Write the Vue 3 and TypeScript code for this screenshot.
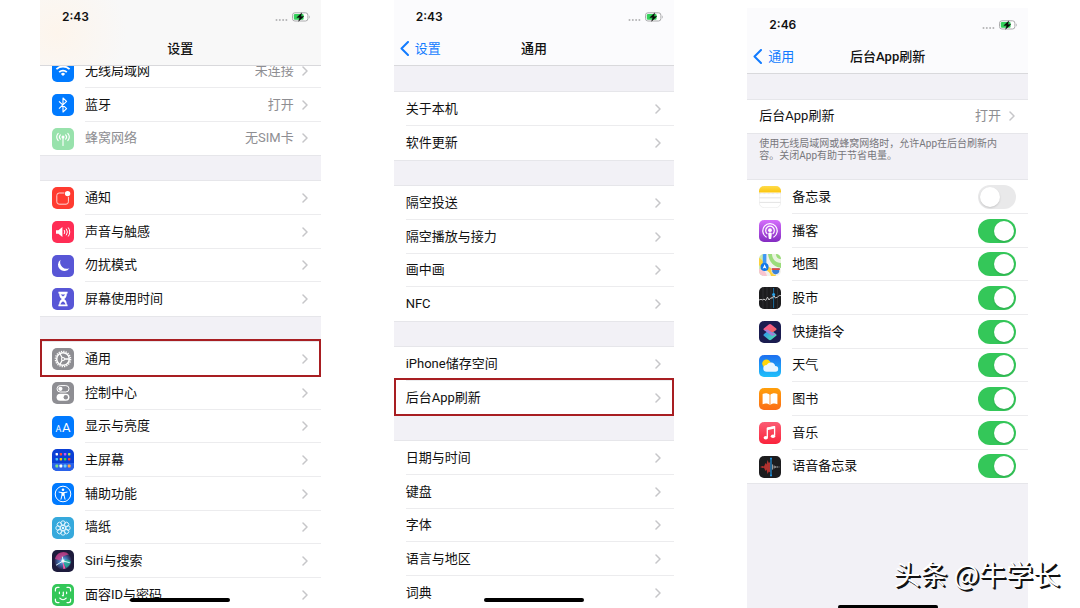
<script setup lang="ts">
import { reactive } from 'vue'

interface Row {
  label: string
  icon?: string
  value?: string
  muted?: boolean
  marked?: boolean
  on?: boolean
}

interface Section {
  kind: 'links' | 'switches'
  rows: Row[]
  note?: string
}

interface Phone {
  id: string
  time: string
  title: string
  back?: string
  sections: Section[]
}

const spokes = (count: number, draw: (angle: number) => string): string =>
  Array.from({ length: count }, (_, i) => draw((360 / count) * i)).join('')

const icons: Record<string, string> = {
  wifi: `<rect width="22" height="22" rx="5" fill="#007aff"/>
    <g fill="none" stroke="#fff" stroke-width="1.8"><path d="M4.4 9.2a9.4 9.4 0 0 1 13.2 0"/><path d="M7.2 12.1a5.4 5.4 0 0 1 7.6 0"/></g>
    <path d="M8.9 13.9a3 3 0 0 1 4.2 0L11 16z" fill="#fff"/>`,
  bluetooth: `<rect width="22" height="22" rx="5" fill="#007aff"/>
    <path d="M7 7.4l7.6 7.2L11 18V4l3.6 3.4L7 14.6" fill="none" stroke="#fff" stroke-width="1.1" stroke-linejoin="round"/>`,
  cellular: `<rect width="22" height="22" rx="5" fill="#98e2ac"/>
    <g fill="none" stroke="#fff" stroke-width="1.1" stroke-linecap="round"><path d="M11 9v8.4"/><path d="M8.4 6.8a3.2 3.2 0 0 0 0 4.4M13.6 6.8a3.2 3.2 0 0 1 0 4.4M6.2 5.4a5.6 5.6 0 0 0 0 7.2M15.8 5.4a5.6 5.6 0 0 1 0 7.2"/></g>
    <circle cx="11" cy="9" r="1.5" fill="#fff"/>`,
  notice: `<rect width="22" height="22" rx="5" fill="#ff3b30"/>
    <rect x="4.8" y="6" width="11.6" height="11.2" rx="2.4" fill="none" stroke="#ffd6d3" stroke-width="1"/>
    <circle cx="15.6" cy="6.6" r="3.4" fill="#ff3b30"/><circle cx="15.6" cy="6.6" r="2.7" fill="#fff"/>`,
  sound: `<rect width="22" height="22" rx="5" fill="#ff2d55"/>
    <path d="M4 9.2h2.4L10.4 6v10l-4-3.2H4z" fill="#fff"/>
    <g fill="none" stroke="#fff" stroke-width="1" stroke-linecap="round"><path d="M12.4 9.4a3 3 0 0 1 0 3.2M14.4 8a5 5 0 0 1 0 6M16.4 6.8a7.4 7.4 0 0 1 0 8.4"/></g>`,
  moon: `<rect width="22" height="22" rx="5" fill="#5856d6"/>
    <path d="M8.6 4.8a6.2 6.2 0 1 0 8.8 8.4A6.6 6.6 0 0 1 8.6 4.8z" fill="#fff"/>`,
  hourglass: `<rect width="22" height="22" rx="5" fill="#5856d6"/>
    <path d="M6.400 3.800h9.200v1.600h-.8c0 3-1 4.400-2.600 5.600 1.600 1.200 2.600 2.600 2.600 5.600h.8v1.600H6.400v-1.600h.8c0-3 1-4.400 2.600-5.600-1.600-1.200-2.600-2.600-2.600-5.600h-.8z" fill="#fff"/>
    <path d="M8.600 6.400h4.800L11 8.400zM8.400 16.400c.4-1.600 1.600-2.200 2.600-3.200 1 1 2.200 1.600 2.600 3.200z" fill="#5856d6"/>`,
  gear: `<rect width="22" height="22" rx="5" fill="#8e8e93"/>
    <circle cx="11" cy="11" r="7.600" fill="none" stroke="#fff" stroke-width="1.400" stroke-dasharray="1.300 1.087"/>
    <circle cx="11" cy="11" r="6.300" fill="none" stroke="#fff" stroke-width="1.500"/>
    <circle cx="11" cy="11" r="1.500" fill="none" stroke="#fff" stroke-width="1.100"/>
    <path d="M12.500 11h4.600M10.200 9.700L8 5.800M10.200 12.300L8 16.200" stroke="#fff" stroke-width="1.300"/>`,
  control: `<rect width="22" height="22" rx="5" fill="#8e8e93"/>
    <rect x="5" y="3.600" width="12" height="6.400" rx="3.200" fill="none" stroke="#fff" stroke-width="1"/><circle cx="8.400" cy="6.800" r="2.100" fill="#fff"/>
    <rect x="4.600" y="11.800" width="12.800" height="7" rx="3.500" fill="#fff"/><circle cx="13.800" cy="15.300" r="2.200" fill="#8e8e93"/>`,
  display: `<rect width="22" height="22" rx="5" fill="#007aff"/>
    <text x="3.600" y="15.600" font-size="9" fill="#fff">A</text><text x="10" y="15.600" font-size="13" fill="#fff">A</text>`,
  home: `<rect width="22" height="22" rx="5" fill="#0a3fd6"/><path d="M0 14h22v3a5 5 0 0 1-5 5H5a5 5 0 0 1-5-5z" fill="#2a62ea"/>
    <g><rect x="3.600" y="4" width="2.400" height="2.400" rx=".6" fill="#fff"/><rect x="7.700" y="4" width="2.400" height="2.400" rx=".6" fill="#ff453a"/><rect x="11.900" y="4" width="2.400" height="2.400" rx=".6" fill="#c65bf5"/><rect x="16" y="4" width="2.400" height="2.400" rx=".6" fill="#b5e04c"/>
    <rect x="3.600" y="9" width="2.400" height="2.400" rx=".6" fill="#4ac8fa"/><rect x="7.700" y="9" width="2.400" height="2.400" rx=".6" fill="#ffcc00"/><rect x="11.900" y="9" width="2.400" height="2.400" rx=".6" fill="#34d05b"/><rect x="16" y="9" width="2.400" height="2.400" rx=".6" fill="#ff453a"/>
    <rect x="3.400" y="15.600" width="2.800" height="2.800" rx=".6" fill="#7fe08a"/><rect x="7.500" y="15.600" width="2.800" height="2.800" rx=".6" fill="#fff"/><rect x="11.700" y="15.600" width="2.800" height="2.800" rx=".6" fill="#6bd0ff"/><rect x="15.800" y="15.600" width="2.800" height="2.800" rx=".6" fill="#ffa64d"/></g>`,
  access: `<rect width="22" height="22" rx="5" fill="#007aff"/>
    <circle cx="11" cy="11" r="7.800" fill="none" stroke="#fff" stroke-width="1"/><circle cx="11" cy="6.800" r="1.300" fill="#fff"/>
    <path d="M7 9.100l3 .5v2.400l-1 4.200M15 9.100l-3 .5v2.400l1 4.200" fill="none" stroke="#fff" stroke-width="1" stroke-linecap="round"/><path d="M9.800 9.200h2.400v3.600H9.800z" fill="#fff"/>`,
  wallpaper: `<rect width="22" height="22" rx="5" fill="#36a9dc"/>
    <g fill="none" stroke="#e8f7ff" stroke-width=".9">${spokes(8, (a) => `<circle cx="11" cy="6" r="2.200" transform="rotate(${a} 11 11)"/>`)}<circle cx="11" cy="11" r="2.600"/></g>
    <circle cx="11" cy="11" r="1.200" fill="#e8f7ff"/>`,
  siri: `<defs><radialGradient id="siriOrb"><stop offset="0" stop-color="#b9f4ff"/><stop offset=".35" stop-color="#4a86c8"/><stop offset="1" stop-color="#28244f"/></radialGradient></defs>
    <rect width="22" height="22" rx="5" fill="#1d1b3c"/><circle cx="11" cy="11" r="8.600" fill="url(#siriOrb)"/>
    <path d="M3 9a8.400 8.400 0 0 1 14-4.600C13 5 9 7 8.400 10.500 6.500 10 4.500 9.500 3 9z" fill="#d8408c" opacity=".75"/>
    <path d="M11 11c3-2 6-2 8 1-1 3-3 5-5 6z" fill="#27b99a" opacity=".75"/>
    <path d="M11 11l-.6-4M11 11l-6.600 4M11 11l6.400 1.600" stroke="#d6f3fb" stroke-width="1" stroke-linecap="round"/>
    <path d="M10.400 10.500l1 8.500 2.200-.6z" fill="#ff5aa5"/><circle cx="11" cy="11" r="1.600" fill="#fff" opacity=".8"/>`,
  face: `<rect width="22" height="22" rx="5" fill="#34c759"/>
    <g fill="none" stroke="#fff" stroke-width="1.200" stroke-linecap="round"><path d="M3.400 7V5.400a2 2 0 0 1 2-2H7M15 3.400h1.600a2 2 0 0 1 2 2V7M18.600 15v1.600a2 2 0 0 1-2 2H15M7 18.600H5.400a2 2 0 0 1-2-2V15"/><path d="M7.400 8v1.600M14.600 8v1.600M11.300 8v3.600h-.9M7.800 14.200c1.800 1.800 4.600 1.800 6.400 0"/></g>`,
  notes: `<defs><linearGradient id="notesTop" x2="0" y2="1"><stop stop-color="#ffdb4a"/><stop offset="1" stop-color="#fbc50c"/></linearGradient></defs>
    <rect x=".3" y=".3" width="21.400" height="21.400" rx="5" fill="#fff" stroke="#e6e6e6" stroke-width=".6"/>
    <path d="M0 6.600V5a5 5 0 0 1 5-5h12a5 5 0 0 1 5 5v1.600z" fill="url(#notesTop)"/>
    <path d="M0 7.600h22" stroke="#cfcfcf" stroke-width=".6" stroke-dasharray=".7 .6"/><path d="M.5 11.800h21M.5 16.400h21" stroke="#dcdcdc" stroke-width=".8"/>`,
  podcast: `<defs><linearGradient id="podBg" x2="0" y2="1"><stop stop-color="#d56efc"/><stop offset="1" stop-color="#832bc1"/></linearGradient></defs>
    <rect width="22" height="22" rx="5" fill="url(#podBg)"/>
    <g fill="none" stroke="#fff" stroke-width="1.200" stroke-linecap="round"><path d="M7.200 17a7.200 7.200 0 1 1 7.600 0"/><path d="M8 13.600a4.300 4.300 0 1 1 6 0"/></g>
    <circle cx="11" cy="10.200" r="1.900" fill="#fff"/><path d="M9.200 13.800c0-1.600 3.600-1.600 3.600 0l-.5 4.400c-.2 1.200-2.400 1.200-2.600 0z" fill="#fff"/>`,
  maps: `<defs><clipPath id="mapClip"><rect width="22" height="22" rx="5"/></clipPath></defs>
    <g clip-path="url(#mapClip)"><path d="M0 0h22v22H0z" fill="#f2f1ec"/><path d="M9 0h13v14C15 13 10 8 9 0z" fill="#9bdc7b"/><path d="M13 0c0 5 4 9 9 9V5c-3 0-5-2-5-5z" fill="#e9f3df"/>
    <path d="M0 0h4v22H0z" fill="#c9ebb3"/><path d="M0 4c3 0 5 7 8 8s8 4 9 10h-5C11 16 3 15 0 11z" fill="#fcd23c"/><path d="M0 15c4 0 7 3 8 7H0z" fill="#f9c4d0"/>
    <path d="M3.800 0h3.600v10H3.800z" fill="#3f98f4"/><circle cx="5.600" cy="13" r="4" fill="#1378e8"/><path d="M5.600 10.200l2 4.600-2-1-2 1z" fill="#fff"/>
    <path d="M12.500 14h8.500l-.4 3.600c-.4 2-2 2.600-3.900 3.200-1.900-.6-3.500-1.200-3.900-3.200z" fill="#3a80d8" stroke="#fff" stroke-width=".7"/><path d="M12.600 14.200h8.300l-.2 1.700h-7.900z" fill="#e2483f"/></g>`,
  stocks: `<rect width="22" height="22" rx="5" fill="#1c1c1e"/>
    <path d="M4 0v22M8 0v22M12 0v22M18.500 0v22" stroke="#3a3a3c" stroke-width=".6"/><path d="M14.600 1v20" stroke="#1c6fa0" stroke-width="1"/>
    <path d="M0 13l2-.6 1.600.5 1.400-.8 1.800 1.300 1.700-3.200 1.500 2.800 2-2.400 1.200.8 1.600-3 1.600 2.600 2-.8 1.800-1.600H22" fill="none" stroke="#d8d8d8" stroke-width=".9"/><circle cx="14.600" cy="7.600" r="1.500" fill="#2aa3e8"/>`,
  shortcuts: `<defs><linearGradient id="scTop" x2="1" y2="1"><stop stop-color="#f9569a"/><stop offset="1" stop-color="#ee6a5b"/></linearGradient><linearGradient id="scLow" x2="1" y2=".6"><stop stop-color="#2f8cf5"/><stop offset="1" stop-color="#4adfae"/></linearGradient></defs>
    <rect width="22" height="22" rx="5" fill="#1b1c50"/>
    <path d="M8.400 10.200l-3.600 3q-.8.800 0 1.600l5 4q1.200.8 2.400 0l5-4q.8-.8 0-1.600l-3.800-3z" fill="url(#scLow)"/>
    <path d="M9.800 3.400q1.200-.8 2.400 0l5 4q.8.800 0 1.600l-3.600 2.600-5.400-2-3.400-.6q-.8-.8 0-1.600z" fill="url(#scTop)"/><path d="M4.800 9l3.600-.4 6 3.600 2.800 1-4 1.800z" fill="#a37fd6"/>`,
  weather: `<defs><linearGradient id="skyBg" x2="0" y2="1"><stop stop-color="#1d6ff0"/><stop offset="1" stop-color="#1fc0fb"/></linearGradient></defs>
    <rect width="22" height="22" rx="5" fill="url(#skyBg)"/><circle cx="7.400" cy="8.600" r="4.200" fill="#ffd60a"/>
    <path d="M7.800 16.800a3.400 3.400 0 0 1-.2-6.800 4.600 4.600 0 0 1 8.600 1 2.900 2.900 0 0 1 .2 5.800z" fill="#eaf6ff"/>`,
  books: `<defs><linearGradient id="bookBg" x2="0" y2="1"><stop stop-color="#ff9f0a"/><stop offset="1" stop-color="#fb6d17"/></linearGradient></defs>
    <rect width="22" height="22" rx="5" fill="url(#bookBg)"/>
    <path d="M10.600 6.800C9 5 6 4.800 3.600 6v10.200c2.600-1 5.200-.8 7 .8zM11.400 6.800C13 5 16 4.800 18.400 6v10.200c-2.600-1-5.200-.8-7 .8z" fill="#fff"/>`,
  music: `<defs><linearGradient id="musicBg" x2="0" y2="1"><stop stop-color="#fb5c74"/><stop offset="1" stop-color="#fa233b"/></linearGradient></defs>
    <rect width="22" height="22" rx="5" fill="url(#musicBg)"/>
    <path d="M8.300 15.400V6.200l7.300-1.600v9.200" fill="none" stroke="#fff" stroke-width="1.300" stroke-linejoin="round"/><path d="M8 5.800l8-1.700v2.400L8 8.200z" fill="#fff"/>
    <ellipse cx="6.800" cy="15.800" rx="2.200" ry="1.800" fill="#fff"/><ellipse cx="14" cy="14.200" rx="2.200" ry="1.800" fill="#fff"/>`,
  voice: `<rect width="22" height="22" rx="5" fill="#1c1c1e"/>
    <path d="M1 11l2.500-1 1.500.4L6.500 7l1 1.500L8.600 4l1.200 3 1.400-1v10.500l-1.400-1L8.600 18l-1.100-4.400-1 1.400L5 11.800l-1.500.2z" fill="#b3322f"/>
    <path d="M13.600 8.400v5.200M15.200 9.600v2.800M16.800 10v2M18.400 10.400v1.200M20 10.600v.8" stroke="#b8b8b8" stroke-width=".9"/><path d="M12 2v18" stroke="#2196e0" stroke-width="1.200"/>
    <circle cx="12" cy="2.400" r="1" fill="#2196e0"/><circle cx="12" cy="19.600" r="1" fill="#2196e0"/>`,
}

const phones = reactive<Phone[]>([
  {
    id: 'settings',
    time: '2:43',
    title: '设置',
    sections: [
      {
        kind: 'links',
        rows: [
          { label: '无线局域网', icon: 'wifi', value: '未连接' },
          { label: '蓝牙', icon: 'bluetooth', value: '打开' },
          { label: '蜂窝网络', icon: 'cellular', value: '无SIM卡', muted: true },
        ],
      },
      {
        kind: 'links',
        rows: [
          { label: '通知', icon: 'notice' },
          { label: '声音与触感', icon: 'sound' },
          { label: '勿扰模式', icon: 'moon' },
          { label: '屏幕使用时间', icon: 'hourglass' },
        ],
      },
      {
        kind: 'links',
        rows: [
          { label: '通用', icon: 'gear', marked: true },
          { label: '控制中心', icon: 'control' },
          { label: '显示与亮度', icon: 'display' },
          { label: '主屏幕', icon: 'home' },
          { label: '辅助功能', icon: 'access' },
          { label: '墙纸', icon: 'wallpaper' },
          { label: 'Siri与搜索', icon: 'siri' },
          { label: '面容ID与密码', icon: 'face' },
        ],
      },
    ],
  },
  {
    id: 'general',
    time: '2:43',
    title: '通用',
    back: '设置',
    sections: [
      { kind: 'links', rows: [{ label: '关于本机' }, { label: '软件更新' }] },
      {
        kind: 'links',
        rows: [{ label: '隔空投送' }, { label: '隔空播放与接力' }, { label: '画中画' }, { label: 'NFC' }],
      },
      { kind: 'links', rows: [{ label: 'iPhone储存空间' }, { label: '后台App刷新', marked: true }] },
      {
        kind: 'links',
        rows: [
          { label: '日期与时间' },
          { label: '键盘' },
          { label: '字体' },
          { label: '语言与地区' },
          { label: '词典' },
        ],
      },
    ],
  },
  {
    id: 'refresh',
    time: '2:46',
    title: '后台App刷新',
    back: '通用',
    sections: [
      {
        kind: 'links',
        rows: [{ label: '后台App刷新', value: '打开' }],
        note: '使用无线局域网或蜂窝网络时，允许App在后台刷新内容。关闭App有助于节省电量。',
      },
      {
        kind: 'switches',
        rows: [
          { label: '备忘录', icon: 'notes', on: false },
          { label: '播客', icon: 'podcast', on: true },
          { label: '地图', icon: 'maps', on: true },
          { label: '股市', icon: 'stocks', on: true },
          { label: '快捷指令', icon: 'shortcuts', on: true },
          { label: '天气', icon: 'weather', on: true },
          { label: '图书', icon: 'books', on: true },
          { label: '音乐', icon: 'music', on: true },
          { label: '语音备忘录', icon: 'voice', on: true },
        ],
      },
    ],
  },
])
</script>

<template>
  <main class="board" lang="zh-CN">
    <article v-for="phone in phones" :key="phone.id" class="phone" :class="phone.id">
      <header class="top">
        <div class="status">
          <time class="clock">{{ phone.time }}</time>
          <span class="signals">
            <svg class="dots" viewBox="0 0 13 10" aria-hidden="true">
              <g fill="#b4b4b6"><circle cx="1.500" cy="8" r="1" /><circle cx="4.800" cy="8" r="1" /><circle cx="8.100" cy="8" r="1" /><circle cx="11.400" cy="8" r="1" /></g>
            </svg>
            <svg class="battery" viewBox="0 0 18 10" aria-hidden="true">
              <rect x=".5" y=".8" width="15.400" height="8.200" rx="2.400" fill="#fff" stroke="#a9a9ab" />
              <path d="M17 3.500v3c.9-.4.9-2.600 0-3z" fill="#a9a9ab" />
              <rect x="1.800" y="2.100" width="9.800" height="5.600" rx="1.200" fill="#34d15b" />
              <path d="M9.800.9L4.800 5.600h3L6.600 9.300l5.200-4.900H8.700z" fill="#0a0a0a" stroke="#0a0a0a" stroke-width=".4" />
            </svg>
          </span>
        </div>
        <div class="titlebar">
          <button v-if="phone.back" type="button" class="back">
            <svg viewBox="0 0 9 15" aria-hidden="true"><path d="M8 1L1.500 7.500 8 14" /></svg>
            <span>{{ phone.back }}</span>
          </button>
          <h1 class="title">{{ phone.title }}</h1>
        </div>
      </header>

      <div class="content">
        <section v-for="(section, s) in phone.sections" :key="s" class="section">
          <ul class="group" :class="section.kind">
            <li v-for="row in section.rows" :key="row.label" class="item" :class="{ marked: row.marked, muted: row.muted }">
              <button v-if="section.kind === 'links'" type="button" class="row">
                <svg v-if="row.icon" class="icon" viewBox="0 0 22 22" aria-hidden="true" v-html="icons[row.icon]"></svg>
                <span class="body">
                  <span class="label">{{ row.label }}</span>
                  <span v-if="row.value" class="value">{{ row.value }}</span>
                  <svg class="chevron" viewBox="0 0 6 10" aria-hidden="true"><path d="M1 1l4 4-4 4" /></svg>
                </span>
              </button>
              <label v-else class="row">
                <svg v-if="row.icon" class="icon" viewBox="0 0 22 22" aria-hidden="true" v-html="icons[row.icon]"></svg>
                <span class="body">
                  <span class="label">{{ row.label }}</span>
                  <input v-model="row.on" type="checkbox" role="switch" class="switch" />
                </span>
              </label>
            </li>
          </ul>
          <p v-if="section.note" class="note">{{ section.note }}</p>
        </section>
      </div>
      <span class="home-bar"></span>
    </article>
    <p class="watermark">头条 @牛学长</p>
  </main>
</template>

<style>
body {
  margin: 0;
  background: #fff;
}
</style>

<style scoped>
.board {
  position: relative;
  display: grid;
  grid-template-columns: repeat(3, 1fr);
  gap: 73px;
  height: 100vh;
  padding: 0 52px 0 40px;
  box-sizing: border-box;
  overflow: hidden;
  font-family: Roboto, "Noto Sans CJK SC", sans-serif;
  font-size: 13px;
  line-height: 20px;
  color: #111;
}

.phone {
  position: relative;
  display: flex;
  flex-direction: column;
  min-height: 0;
  overflow: hidden;
  background: #f2f1f6;
}

.refresh {
  margin-top: 8px;
}

.top {
  position: relative;
  z-index: 1;
  flex: none;
  background: #fbfbfd;
  border-bottom: 1px solid #d9d9dc;
}

.settings .top {
  background: radial-gradient(circle at 6% 50%, #fdf5ec, #f8f8f8 26%);
}

.status {
  display: flex;
  align-items: center;
  justify-content: space-between;
  height: 34px;
  padding: 0 11px 0 22px;
}

.clock {
  font-family: Inter, sans-serif;
  font-size: 12px;
  font-weight: 600;
}

.signals {
  display: flex;
  align-items: center;
  gap: 4px;
}

.dots {
  width: 13px;
  height: 10px;
}

.battery {
  width: 18px;
  height: 10px;
}

.titlebar {
  display: grid;
  grid-template-columns: 1fr auto 1fr;
  align-items: center;
  height: 29px;
  padding-bottom: 2px;
}

.title {
  grid-column: 2;
  margin: 0;
  font-size: 13px;
  font-weight: 500;
}

.back {
  display: flex;
  align-items: center;
  gap: 6px;
  padding: 0 0 0 6px;
  border: 0;
  background: none;
  font: inherit;
  color: #127bff;
}

.back svg {
  width: 9px;
  height: 15px;
  fill: none;
  stroke: currentColor;
  stroke-width: 2;
  stroke-linecap: round;
  stroke-linejoin: round;
}

.content {
  display: flex;
  flex-direction: column;
  gap: 26px;
  padding-top: 26px;
}

.settings .content {
  margin-top: -12px;
  padding-top: 0;
}

.refresh .content {
  gap: 0;
}

.group {
  margin: 0;
  padding: 0;
  list-style: none;
  background: #fff;
  box-shadow: 0 -1px #e6e6ea, 0 1px #e6e6ea;
}

.item {
  position: relative;
  height: 34px;
}

.item:nth-child(3n),
.item:only-child {
  height: 33px;
}

.marked::after {
  content: "";
  position: absolute;
  inset: -3px 0 -1px;
  border: 2px solid #a81e22;
  pointer-events: none;
}

.row {
  display: flex;
  align-items: center;
  gap: 11px;
  width: 100%;
  height: 100%;
  padding: 0 0 0 12px;
  box-sizing: border-box;
  border: 0;
  background: none;
  font: inherit;
  color: inherit;
  text-align: left;
}

.icon {
  flex: none;
  width: 22px;
  height: 22px;
}

.body {
  display: flex;
  flex: 1;
  align-items: center;
  gap: 8px;
  height: 100%;
  padding-right: 13px;
  box-sizing: border-box;
  border-bottom: 1px solid #ececee;
}

.switches .body {
  padding-right: 12px;
}

.item:last-child .body {
  border-bottom-color: transparent;
}

.label {
  flex: 1;
}

.value,
.muted .label {
  color: #8e8e92;
}

.chevron {
  width: 6px;
  height: 10px;
  fill: none;
  stroke: #c6c6c9;
  stroke-width: 1.5;
  stroke-linecap: round;
  stroke-linejoin: round;
}

.switch {
  appearance: none;
  width: 38px;
  height: 24px;
  margin: 0;
  padding: 2px;
  box-sizing: border-box;
  border-radius: 12px;
  background: #e9e9ea;
}

.switch::before {
  content: "";
  display: block;
  width: 20px;
  height: 20px;
  border-radius: 50%;
  background: #fff;
  box-shadow: 0 1px 2px rgba(0, 0, 0, 0.15);
}

.switch:checked {
  background: #34c759;
}

.switch:checked::before {
  margin-left: auto;
}

.note {
  margin: 0;
  padding: 5px 24px 18px 12px;
  font-size: 10px;
  line-height: 12px;
  color: #77777c;
}

.home-bar {
  position: absolute;
  bottom: 6px;
  left: 50%;
  z-index: 2;
  width: 100px;
  height: 4px;
  margin-left: -50px;
  border-radius: 2px;
  background: #000;
}

.refresh .home-bar {
  bottom: -1px;
}

.watermark {
  position: absolute;
  right: 20px;
  bottom: 16px;
  z-index: 3;
  margin: 0;
  font-family: "Noto Sans CJK SC", sans-serif;
  font-size: 27px;
  line-height: 36px;
  color: #fff;
  text-shadow: 1px 1px 0 #111, 2px 2px 0 #111;
}
</style>
